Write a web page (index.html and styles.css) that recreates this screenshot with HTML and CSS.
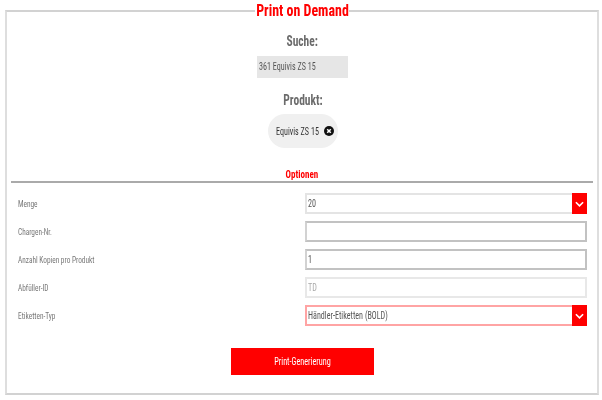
FILE: index.html
```html
<!DOCTYPE html>
<html lang="de">
<head>
    <meta charset="UTF-8">
    <title>Print on Demand</title>
    <link rel="stylesheet" href="styles.css">
</head>
<body>
    <fieldset class="frame">
        <legend class="frame-title"><span>Print on Demand</span></legend>

        <div class="search">
            <h2><span>Suche:</span></h2>
            <div class="search-box"><span>361 Equivis ZS 15</span></div>
            <h2><span>Produkt:</span></h2>
            <div class="chip">
                <span class="chip-text">Equivis ZS 15</span>
                <svg class="chip-close" viewBox="0 0 10 10" width="10" height="10">
                    <circle cx="5" cy="5" r="5" fill="#111"/>
                    <path d="M3.2 3.2l3.6 3.6M6.8 3.2l-3.6 3.6" stroke="#fff" stroke-width="1.5"/>
                </svg>
            </div>
        </div>

        <h3 class="options-title"><span>Optionen</span></h3>

        <div class="options">
            <label><span>Menge</span></label>
            <div class="field select">
                <span>20</span>
                <span class="arrow"><svg viewBox="0 0 10 6" width="9" height="6"><path d="M1 1l4 4 4-4" fill="none" stroke="#fff" stroke-width="1.8"/></svg></span>
            </div>

            <label><span>Chargen-Nr.</span></label>
            <div class="field input"></div>

            <label><span>Anzahl Kopien pro Produkt</span></label>
            <div class="field input"><span>1</span></div>

            <label><span>Abfüller-ID</span></label>
            <div class="field disabled"><span>TD</span></div>

            <label><span>Etiketten-Typ</span></label>
            <div class="field select invalid">
                <span>Händler-Etiketten (BOLD)</span>
                <span class="arrow"><svg viewBox="0 0 10 6" width="9" height="6"><path d="M1 1l4 4 4-4" fill="none" stroke="#fff" stroke-width="1.8"/></svg></span>
            </div>
        </div>

        <div class="actions">
            <button class="print-btn"><span>Print-Generierung</span></button>
        </div>
    </fieldset>
</body>
</html>
```

FILE: styles.css
```css
* {
    box-sizing: border-box;
}

body {
    margin: 0;
    background-color: #fff;
    font-family: Roboto, 'Liberation Sans', sans-serif;
    font-stretch: 75%;
    color: #555;
}

/* the whole page looks squeezed sideways, so the text is narrowed to match */
.frame-title span,
.search h2 span,
.options-title span,
.print-btn span {
    display: inline-block;
    white-space: nowrap;
    transform: scaleX(0.82);
}

.search-box span,
.chip-text,
.options label span,
.field > span:first-child {
    display: inline-block;
    white-space: nowrap;
    transform: scaleX(0.77);
    transform-origin: left center;
}

.frame {
    width: 594px;
    height: 394px;
    margin: 1px 0 0 5px;
    padding: 0 4px;
    border: 2px solid #d2d2d2;
    border-left-color: #dedede;
    border-right-color: #dedede;
    min-width: 0;
    filter: blur(0.35px);
}

.frame-title {
    width: 94px;
    margin: 0 auto;
    padding: 0;
    font-size: 17px;
    font-weight: 700;
    line-height: 19px;
    text-align: center;
    color: #f00;
}

.frame-title span {
    margin: 0 -10px;
}

.search {
    display: flex;
    flex-direction: column;
    align-items: center;
    margin-left: 1px;
}

.search h2 {
    margin: 0;
    font-size: 14px;
    font-weight: 700;
    line-height: 18px;
    color: #6b6b6b;
}

.search h2:first-child {
    margin-top: 12px;
}

.search-box {
    width: 91px;
    height: 22px;
    margin: 6px 0 13px;
    padding-left: 2px;
    background-color: #e6e6e6;
    font-size: 10.5px;
    line-height: 22px;
}

.chip {
    display: flex;
    align-items: center;
    width: 70px;
    height: 34px;
    margin-top: 5px;
    padding-left: 8px;
    border-radius: 17px;
    background-color: #f0f0f0;
    font-size: 10.5px;
    color: #333;
}

.chip-text {
    margin-right: -7px;
}

.options-title {
    margin: 20px 0 0;
    border-bottom: 2px solid #aaa;
    font-size: 11px;
    font-weight: 700;
    line-height: 13px;
    text-align: center;
    color: #f00;
}

.options {
    display: grid;
    grid-template-columns: 287px 282px;
    grid-auto-rows: 21px;
    row-gap: 7px;
    margin-top: 10px;
    padding-left: 7px;
    align-items: center;
}

.options label {
    font-size: 9.5px;
    color: #777;
}

.field {
    display: flex;
    align-items: center;
    justify-content: space-between;
    height: 21px;
    padding-left: 1px;
    border: 2px solid #c2c2c2;
    border-left-color: #d2d2d2;
    font-size: 10.5px;
}

.select {
    border-color: #e4e4e4;
}

.select.invalid {
    border-color: #ffa4a4;
}

.disabled {
    border-color: #e8e8e8;
    color: #aaa;
}

.arrow {
    display: flex;
    align-items: center;
    justify-content: center;
    width: 15px;
    height: 21px;
    margin-right: -2px;
    background-color: #f00;
}

.actions {
    display: flex;
    justify-content: center;
    margin-top: 22px;
}

.print-btn {
    width: 143px;
    height: 27px;
    border: none;
    background-color: #f00;
    font-family: inherit;
    font-stretch: inherit;
    font-size: 10px;
    color: #fff;
}
```
